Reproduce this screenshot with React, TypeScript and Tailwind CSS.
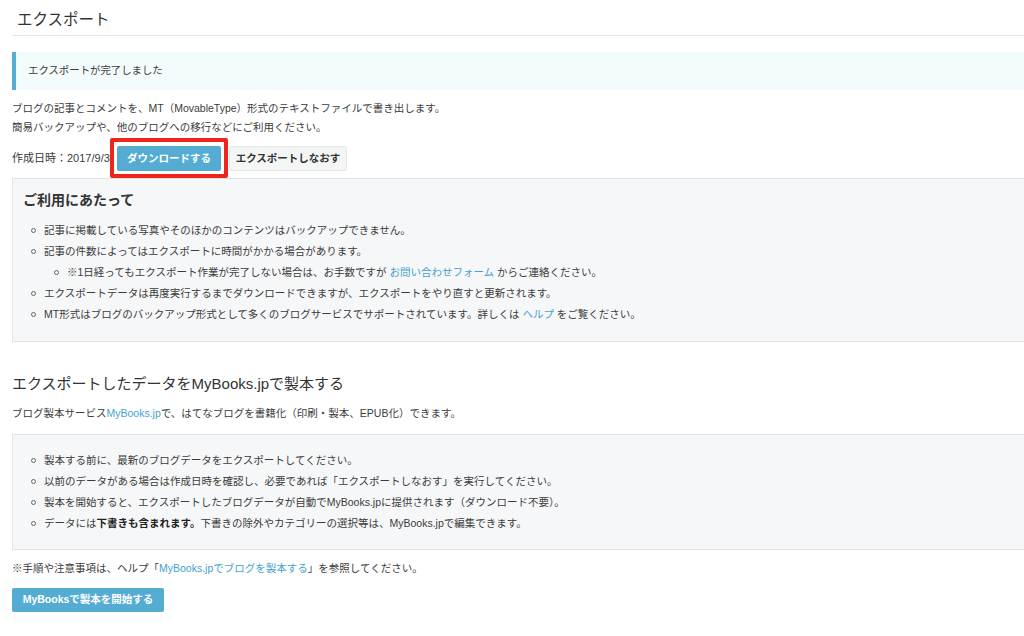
import React from "react";

const font = {
  fontFamily: '"Liberation Sans", "Noto Sans CJK JP", sans-serif',
};

function Bullet({ nested = false }: { nested?: boolean }) {
  return (
    <span
      className={
        "inline-block w-[5px] h-[5px] rounded-full border border-[#666] shrink-0 " +
        (nested ? "ml-[31px] mr-[8px]" : "ml-[8px] mr-[8px]")
      }
    />
  );
}

function Item({ children, nested = false }: { children: React.ReactNode; nested?: boolean }) {
  return (
    <li className="flex items-center h-[21px] whitespace-nowrap">
      <Bullet nested={nested} />
      <span>{children}</span>
    </li>
  );
}

const Link = ({ children }: { children: React.ReactNode }) => (
  <span className="text-[#45a2cf]">{children}</span>
);

export default function App() {
  return (
    <div className="w-[1024px] min-h-[636px] bg-white overflow-hidden">
      <div className="w-[1044px] pl-3 text-[#3b3b3b] text-[10.5px]" style={font}>
        <h1 className="h-[36px] border-b border-[#e4e7e7] pt-[5px] pl-[5px] flex items-center text-[15.5px] font-normal text-[#333]">
          エクスポート
        </h1>

        <div className="mt-[16px] h-[38px] border-l-4 border-[#56afd2] bg-[#f3fcfc] flex items-center pl-3 text-[10.4px]">
          エクスポートが完了しました
        </div>

        <p className="mt-[9px] leading-[19px]">
          ブログの記事とコメントを、MT（MovableType）形式のテキストファイルで書き出します。
          <br />
          簡易バックアップや、他のブログへの移行などにご利用ください。
        </p>

        <div className="mt-[9px] h-[25px] flex items-center">
          <div className="w-[105px] whitespace-nowrap text-[11px]">作成日時：2017/9/30</div>
          <div className="relative h-[25px]">
            <span className="absolute -left-[7px] -right-[7px] -top-[8px] -bottom-[7px] border-[4px] border-[#f0241b] bg-white rounded-[2px]" />
            <button className="relative h-[25px] w-[104px] bg-[#55acd3] text-white font-bold text-[10.5px] rounded-[2px]">
              ダウンロードする
            </button>
          </div>
          <button className="ml-[8px] h-[25px] w-[118px] bg-[#f4f5f5] border border-[#e7e8e8] text-[#333] font-bold text-[10.5px] rounded-[2px]">
            エクスポートしなおす
          </button>
        </div>

        <div className="mt-[7px] border border-[#e3e6e7] bg-[#f6f7f8] pl-[10px] pt-[11px] pb-[16px]">
          <h2 className="h-[20px] leading-[20px] text-[14px] font-bold text-[#333] mb-[10px]">
            ご利用にあたって
          </h2>
          <ul>
            <Item>記事に掲載している写真やそのほかのコンテンツはバックアップできません。</Item>
            <Item>記事の件数によってはエクスポートに時間がかかる場合があります。</Item>
            <Item nested>
              ※1日経ってもエクスポート作業が完了しない場合は、お手数ですが <Link>お問い合わせフォーム</Link> からご連絡ください。
            </Item>
            <Item>エクスポートデータは再度実行するまでダウンロードできますが、エクスポートをやり直すと更新されます。</Item>
            <Item>
              MT形式はブログのバックアップ形式として多くのブログサービスでサポートされています。詳しくは <Link>ヘルプ</Link> をご覧ください。
            </Item>
          </ul>
        </div>

        <h2 className="mt-[31px] h-[22px] leading-[22px] text-[15px] font-normal text-[#333]">
          エクスポートしたデータをMyBooks.jpで製本する
        </h2>

        <p className="mt-[8.5px] leading-[19px]">
          ブログ製本サービス<Link>MyBooks.jp</Link>で、はてなブログを書籍化（印刷・製本、EPUB化）できます。
        </p>

        <div className="mt-[11.5px] border border-[#e3e6e7] bg-[#f6f7f8] pl-[10px] pt-[15px] pb-[15px]">
          <ul>
            <Item>製本する前に、最新のブログデータをエクスポートしてください。</Item>
            <Item>以前のデータがある場合は作成日時を確認し、必要であれば「エクスポートしなおす」を実行してください。</Item>
            <Item>製本を開始すると、エクスポートしたブログデータが自動でMyBooks.jpに提供されます（ダウンロード不要）。</Item>
            <Item>
              データには<b className="font-bold text-[#222]">下書きも含まれます。</b>下書きの除外やカテゴリーの選択等は、MyBooks.jpで編集できます。
            </Item>
          </ul>
        </div>

        <p className="mt-[8.5px] leading-[19px]">
          ※手順や注意事項は、ヘルプ「<Link>MyBooks.jpでブログを製本する</Link>」を参照してください。
        </p>

        <button className="mt-[10.5px] h-[24px] w-[152px] bg-[#55acd3] text-white font-bold text-[10.5px] rounded-[2px]">
          MyBooksで製本を開始する
        </button>
      </div>
    </div>
  );
}
